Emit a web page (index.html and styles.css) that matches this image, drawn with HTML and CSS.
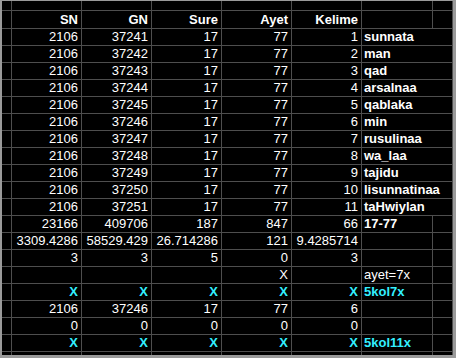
FILE: index.html
```html
<!DOCTYPE html>
<html lang="tr">
<head>
    <meta charset="UTF-8">
    <meta name="viewport" content="width=device-width, initial-scale=1.0">
    <title>Kelime tablosu</title>
    <link rel="stylesheet" href="styles.css">
</head>
<body>
    <div class="sheet">
        <div class="grid">
            <!-- ust bos satir -->
            <div></div><div></div><div></div><div></div><div></div><div></div><div></div><div></div>

            <!-- basliklar -->
            <div></div>
            <div class="hd">SN</div>
            <div class="hd">GN</div>
            <div class="hd">Sure</div>
            <div class="hd">Ayet</div>
            <div class="hd">Kelime</div>
            <div></div><div></div>

            <!-- kelimeler -->
            <div></div><div class="num">2106</div><div class="num">37241</div><div class="num">17</div><div class="num">77</div><div class="num">1</div><div class="word wide">sunnata</div>
            <div></div><div class="num">2106</div><div class="num">37242</div><div class="num">17</div><div class="num">77</div><div class="num">2</div><div class="word wide">man</div>
            <div></div><div class="num">2106</div><div class="num">37243</div><div class="num">17</div><div class="num">77</div><div class="num">3</div><div class="word wide">qad</div>
            <div></div><div class="num">2106</div><div class="num">37244</div><div class="num">17</div><div class="num">77</div><div class="num">4</div><div class="word wide">arsalnaa</div>
            <div></div><div class="num">2106</div><div class="num">37245</div><div class="num">17</div><div class="num">77</div><div class="num">5</div><div class="word wide">qablaka</div>
            <div></div><div class="num">2106</div><div class="num">37246</div><div class="num">17</div><div class="num">77</div><div class="num">6</div><div class="word wide">min</div>
            <div></div><div class="num">2106</div><div class="num">37247</div><div class="num">17</div><div class="num">77</div><div class="num">7</div><div class="word wide">rusulinaa</div>
            <div></div><div class="num">2106</div><div class="num">37248</div><div class="num">17</div><div class="num">77</div><div class="num">8</div><div class="word wide">wa_laa</div>
            <div></div><div class="num">2106</div><div class="num">37249</div><div class="num">17</div><div class="num">77</div><div class="num">9</div><div class="word wide">tajidu</div>
            <div></div><div class="num">2106</div><div class="num">37250</div><div class="num">17</div><div class="num">77</div><div class="num">10</div><div class="word wide">lisunnatinaa</div>
            <div></div><div class="num">2106</div><div class="num">37251</div><div class="num">17</div><div class="num">77</div><div class="num">11</div><div class="word wide">taHwiylan</div>

            <!-- toplam / ortalama -->
            <div></div><div class="num">23166</div><div class="num">409706</div><div class="num">187</div><div class="num">847</div><div class="num">66</div><div class="word">17-77</div><div></div>
            <div></div><div class="num">3309.4286</div><div class="num">58529.429</div><div class="num">26.714286</div><div class="num">121</div><div class="num">9.4285714</div><div></div><div></div>
            <div></div><div class="num">3</div><div class="num">3</div><div class="num">5</div><div class="num">0</div><div class="num">3</div><div></div><div></div>
            <div></div><div></div><div></div><div></div><div class="num">X</div><div></div><div class="note">ayet=7x</div><div></div>
            <div></div><div class="num x">X</div><div class="num x">X</div><div class="num x">X</div><div class="num x">X</div><div class="num x">X</div><div class="word x">5kol7x</div><div></div>
            <div></div><div class="num">2106</div><div class="num">37246</div><div class="num">17</div><div class="num">77</div><div class="num">6</div><div></div><div></div>
            <div></div><div class="num">0</div><div class="num">0</div><div class="num">0</div><div class="num">0</div><div class="num">0</div><div></div><div></div>
            <div></div><div class="num x">X</div><div class="num x">X</div><div class="num x">X</div><div class="num x">X</div><div class="num x">X</div><div class="word x">5kol11x</div><div></div>

            <!-- alt kesik satir -->
            <div></div><div></div><div></div><div></div><div></div><div></div><div></div><div></div>
        </div>
    </div>
</body>
</html>
```

FILE: styles.css
```css
* {
    margin: 0;
    padding: 0;
    box-sizing: border-box;
}

body {
    background: #d4d0c8;
    font-family: 'Liberation Sans', Arial, sans-serif;
    font-size: 13px;
    color: #fff;
}

.sheet {
    width: 456px;
    height: 358px;
    border-top: 1px solid #9a9a9a;
    border-left: 2px solid #9a9a9a;
    border-right: 3px solid #9a9a9a;
    border-bottom: 3px solid #9a9a9a;
    background: #000;
    overflow: hidden;
}

.grid {
    display: grid;
    grid-template-columns: 9px 69px 69px 69px 69px 69px 70px 19px;
    grid-template-rows: 9px 17px repeat(19, 16px) 3px;
    gap: 1px;
    background: #4e4e4e;
    border-right: 1px solid #4e4e4e;
}

.grid > div {
    background: #000;
    line-height: 16px;
    white-space: nowrap;
    overflow: hidden;
}

.hd {
    font-weight: bold;
    text-align: right;
    padding-right: 3px;
    line-height: 18px !important;
}

.num {
    text-align: right;
    padding-right: 3px;
}

.word {
    font-weight: bold;
    padding-left: 2px;
}

.wide {
    grid-column: span 2;
}

.note {
    padding-left: 2px;
}

.x {
    color: #33f0ff;
    font-weight: bold;
}
```
